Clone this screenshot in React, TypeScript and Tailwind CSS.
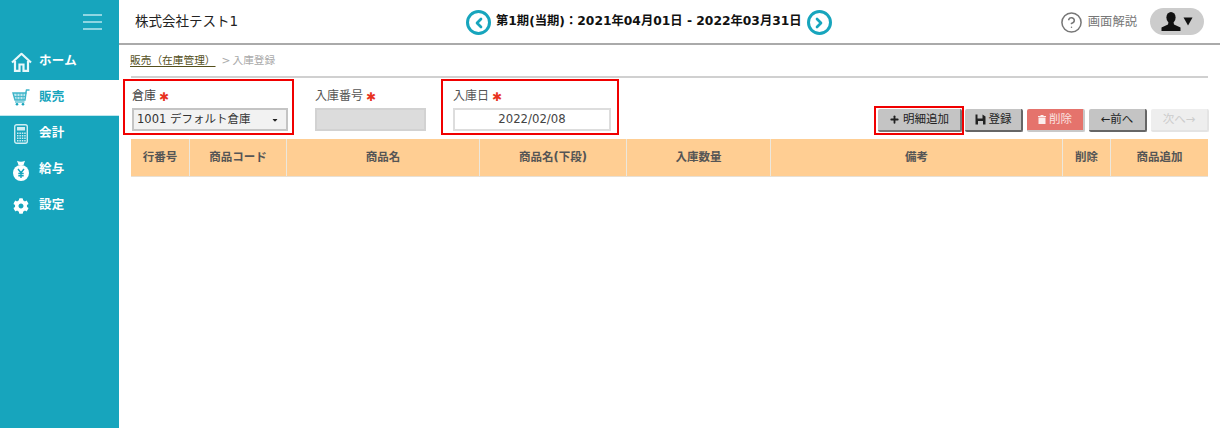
import { ChevronLeft, ChevronRight, Plus, CircleHelp } from "lucide-react"
import { FaCog, FaCaretDown } from "react-icons/fa"

const FONT = "font-['DejaVu_Sans','Noto_Sans_CJK_JP',sans-serif]"

function HomeIcon() {
  return (
    <svg width="21" height="20" viewBox="0 0 21 20" fill="none" stroke="#e8f8fa" strokeWidth="2.2">
      <path d="M1 10.5 L10.5 1.8 L20 10.5" strokeLinejoin="round" />
      <path d="M4 9 V18.8 H8.5 V12.5 H12.5 V18.8 H17 V9" />
    </svg>
  )
}

function CartIcon() {
  return (
    <svg width="18" height="17" viewBox="0 0 18 17" fill="none" stroke="#3fb5c9">
      <path d="M1 4 H14 L13 11 H3 Z" fill="#bfe7ee" strokeWidth="1.4" />
      <path d="M5 4 V11 M8 4 V11 M11 4 V11 M2 7.5 H14" strokeWidth="0.9" />
      <path d="M13.5 5 L14.5 1 H17.5" strokeWidth="1.4" />
      <path d="M3 13 H12.5" strokeWidth="1.2" />
      <circle cx="5" cy="15.2" r="1.3" fill="#17a5bd" stroke="none" />
      <circle cx="11" cy="15.2" r="1.3" fill="#17a5bd" stroke="none" />
    </svg>
  )
}

function CalcIcon() {
  return (
    <svg width="14" height="20" viewBox="0 0 14 20">
      <rect x="0.7" y="0.7" width="12.6" height="18.6" rx="2" fill="#17a5bd" stroke="#cfeef3" strokeWidth="1.4" />
      <rect x="3" y="3" width="8" height="3.5" fill="#cfeef3" />
      {[8.5, 11, 13.5, 16].map((y) =>
        [3, 5.4, 7.8, 10.2].map((x) => <rect key={`${x}-${y}`} x={x} y={y} width="1.5" height="1.5" fill="#cfeef3" />),
      )}
    </svg>
  )
}

function MoneyBag() {
  return (
    <svg width="18" height="21" viewBox="0 0 18 21">
      <path d="M5 0.8 Q9 2.5 13 0.8 L11.5 5 H6.5 Z" fill="#fff" />
      <circle cx="9" cy="13" r="8" fill="#fff" />
      <path d="M6 9 L9 12.8 L12 9 M9 12.8 V18 M6.3 13.5 H11.7 M6.3 15.8 H11.7" stroke="#17a5bd" strokeWidth="1.4" fill="none" />
    </svg>
  )
}

function FloppyIcon() {
  return (
    <svg width="11" height="11" viewBox="0 0 11 11">
      <path d="M0.5 0.5 H2.5 V4.5 H7.5 V0.5 L10.5 2.5 V10.5 H8 V7 H3 V10.5 H0.5 Z" fill="#222" />
    </svg>
  )
}

function TrashIcon() {
  return (
    <svg width="8" height="9" viewBox="0 0 8 9">
      <path d="M2.5 0 H5.5 V1 H8 V2 H0 V1 H2.5 Z M0.5 2.6 H7.5 V9 H0.5 Z" fill="#fbeeed" />
    </svg>
  )
}

function UserIcon() {
  return (
    <svg width="20" height="19" viewBox="0 0 20 19" fill="#111">
      <ellipse cx="10" cy="5.5" rx="4.6" ry="5.5" />
      <path d="M7.5 10 H12.5 L13 12.5 L19.5 15.5 V19 H0.5 V15.5 L7 12.5 Z" />
    </svg>
  )
}

function CaretIcon() {
  return (
    <svg width="10" height="9" viewBox="0 0 10 9" fill="#111">
      <path d="M0.5 0.5 H9.5 L5 8.5 Z" />
    </svg>
  )
}

const NAV = [
  { label: "ホーム", icon: <HomeIcon /> },
  { label: "販売", icon: <CartIcon />, active: true },
  { label: "会計", icon: <CalcIcon /> },
  { label: "給与", icon: <MoneyBag /> },
  { label: "設定", icon: <FaCog size={16} className="text-white" /> },
]

const COLS = [
  { label: "行番号", w: "w-[59px]" },
  { label: "商品コード", w: "w-[97px]" },
  { label: "商品名", w: "w-[193px]" },
  { label: "商品名(下段)", w: "w-[147px]" },
  { label: "入庫数量", w: "w-[144px]" },
  { label: "備考", w: "w-[292px]" },
  { label: "削除", w: "w-[48px]" },
  { label: "商品追加", w: "w-[97px]" },
]

function Star() {
  return <span className="text-[#e8321e] text-[12px] leading-none ml-[3px] mt-[2px]">✱</span>
}

const BTN = "h-[23px] flex items-center justify-center gap-[3px] rounded-[2px] text-[11.5px] border-r-2 border-b-2"

export default function App() {
  return (
    <div className={`flex w-[1220px] h-[428px] overflow-hidden bg-white ${FONT}`}>
      <aside className="w-[119px] shrink-0 bg-[#17a5bd] flex flex-col">
        <div className="h-[44px] flex flex-col items-end justify-center gap-[5px] pr-[17px] pb-[1px]">
          <span className="w-[19px] h-[2px] bg-[#8fd6e2]" />
          <span className="w-[19px] h-[2px] bg-[#8fd6e2]" />
          <span className="w-[19px] h-[2px] bg-[#8fd6e2]" />
        </div>
        {NAV.map((n) => (
          <div
            key={n.label}
            className={`h-9 flex items-center text-[12.5px] font-bold ${n.active ? "bg-white text-[#17a5bd] border-b border-[#bfe7ee]" : "text-white"}`}
          >
            <span className="w-[39px] flex justify-center pl-[3px]">{n.icon}</span>
            <span className="tracking-[0.3px] -mt-[1px]">{n.label}</span>
          </div>
        ))}
      </aside>

      <main className="flex-1 flex flex-col min-w-0">
        <header className="h-[45px] shrink-0 border-b-2 border-[#aaaaaa] flex items-center pl-[16px] pr-[16px] pt-[2px]">
          <div className="w-[331px] text-[13.5px] text-[#222] -mt-[2px]">株式会社テスト1</div>
          <div className="flex items-center gap-[5px]">
            <span className="w-[25px] h-[25px] rounded-full border-[3px] border-[#17a5bd] flex items-center justify-center">
              <ChevronLeft size={16} strokeWidth={4} className="text-[#17a5bd]" />
            </span>
            <span className="text-[12.3px] font-bold text-[#111] whitespace-nowrap -mt-[2px]">第1期(当期)：2021年04月01日 - 2022年03月31日</span>
            <span className="w-[25px] h-[25px] rounded-full border-[3px] border-[#17a5bd] flex items-center justify-center">
              <ChevronRight size={16} strokeWidth={4} className="text-[#17a5bd]" />
            </span>
          </div>
          <div className="ml-auto flex items-center">
            <CircleHelp size={23} strokeWidth={1.6} className="text-[#777]" />
            <span className="ml-[5px] mr-[13px] text-[12.3px] text-[#777]">画面解説</span>
            <span className="w-[54px] h-[27px] rounded-full bg-[#cccccc] flex items-center justify-center gap-[2px] -mt-[2px]">
              <UserIcon />
              <CaretIcon />
            </span>
          </div>
        </header>

        <div className="px-[12px] flex-1 flex flex-col">
          <div className="h-[33px] shrink-0 pt-[7px] border-b-2 border-[#d0d0d0] text-[10.7px] leading-[17px] flex items-start">
            <span className="-ml-[1px] text-[#55501c] underline underline-offset-2">販売（在庫管理）</span>
            <span className="text-[#aaa] ml-[6px]">&gt;</span>
            <span className="text-[#aaa] ml-[2px]">入庫登録</span>
          </div>

          <div className="h-[61px] shrink-0 flex items-start">
            <div className="mt-[1px] -ml-[8px] w-[171px] h-[56px] border-[2px] border-[#f00000] pl-[7px] pt-[5px]">
              <div className="h-[22px] pb-[3px] flex items-center text-[12px] text-[#444]">倉庫<Star /></div>
              <div className="w-[156px] h-[23px] border-2 border-[#c4c4c4] bg-[#f2f2f2] flex items-center justify-between pl-[3px] pr-[7px] text-[11.5px] text-[#333]">
                <span>1001 デフォルト倉庫</span>
                <FaCaretDown size={8} className="text-[#222]" />
              </div>
            </div>
            <div className="ml-[21px] mt-[8px]">
              <div className="h-[22px] pb-[3px] flex items-center text-[12px] text-[#555]">入庫番号<Star /></div>
              <div className="w-[111px] h-[23px] border-2 border-[#d2d2d2] bg-[#dcdcdc]" />
            </div>
            <div className="ml-[15px] mt-[1px] w-[178px] h-[56px] border-[2px] border-[#f00000] pl-[10px] pt-[5px]">
              <div className="h-[22px] pb-[3px] flex items-center text-[12px] text-[#555]">入庫日<Star /></div>
              <div className="w-[158px] h-[23px] border-2 border-[#dddddd] bg-white flex items-center justify-center text-[11.7px] text-[#444]">
                2022/02/08
              </div>
            </div>
            <div className="ml-auto -mr-[1px] mt-[28px] flex items-center">
              <div className="border-[2px] border-[#f00000] w-[90px] h-[29px] flex items-center pl-[2px]">
                <button className={`${BTN} w-[84px] bg-[#c4c4c4] text-[#222] border-[#777]`}>
                  <Plus size={11} strokeWidth={4} />明細追加
                </button>
              </div>
              <button className={`${BTN} ml-[1px] w-[58px] bg-[#c4c4c4] text-[#222] border-[#666]`}>
                <FloppyIcon />登録
              </button>
              <button className={`${BTN} ml-[4px] w-[58px] bg-[#e5736c] text-[#fbe3e1] border-[#c9c9c9]`}>
                <TrashIcon />削除
              </button>
              <button className={`${BTN} ml-[4px] w-[58px] bg-[#c4c4c4] text-[#222] border-[#666]`}>
                ←前へ
              </button>
              <button className={`${BTN} ml-[4px] w-[58px] bg-[#eeeeee] text-[#ccc] border-[#e4e4e4]`}>
                次へ→
              </button>
            </div>
          </div>

          <div className="flex h-[38px] bg-[#ffce93] border-b border-[#e8e0d4]">
            {COLS.map((c, i) => (
              <div
                key={c.label}
                className={`${c.w} shrink-0 flex items-center justify-center pt-[1px] text-[11.5px] font-bold text-[#555] ${i < COLS.length - 1 ? "border-r border-[#ece7dc]" : ""}`}
              >
                {c.label}
              </div>
            ))}
          </div>
        </div>
      </main>
    </div>
  )
}
